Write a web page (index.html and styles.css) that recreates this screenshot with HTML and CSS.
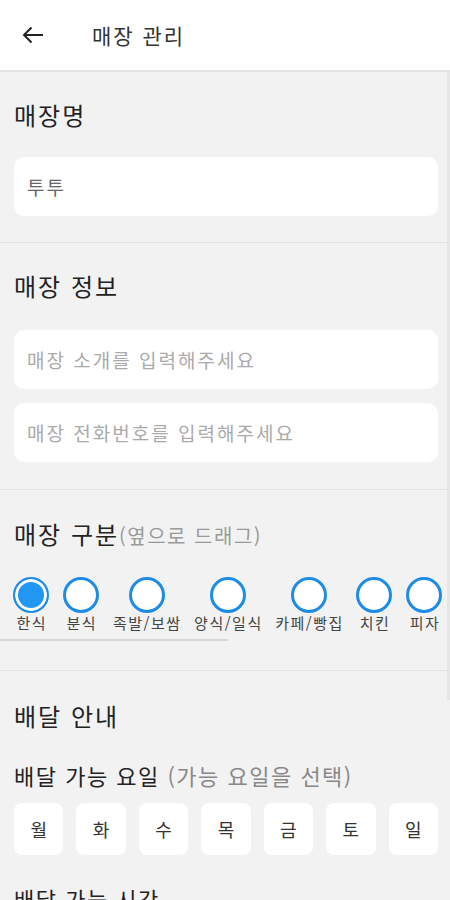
FILE: index.html
```html
<!DOCTYPE html>
<html lang="ko">
<head>
    <meta charset="UTF-8">
    <meta name="viewport" content="width=device-width, initial-scale=1.0">
    <title>매장 관리</title>
    <link rel="stylesheet" href="styles.css">
</head>
<body>
    <div id="header">
        <svg class="back" width="22" height="18" viewBox="0 0 22 18">
            <path d="M21 9H2M9.5 1.5L2 9l7.5 7.5" fill="none" stroke="#222" stroke-width="2"/>
        </svg>
        <h1>매장 관리</h1>
    </div>

    <div id="content">
        <div class="section first">
            <h2>매장명</h2>
            <input class="field" type="text" value="투투">
        </div>

        <div class="section info">
            <h2>매장 정보</h2>
            <div class="fields">
                <input class="field" type="text" placeholder="매장 소개를 입력해주세요">
                <input class="field" type="text" placeholder="매장 전화번호를 입력해주세요">
            </div>
        </div>

        <div class="section kind">
            <h2>매장 구분<span class="hint">(옆으로 드래그)</span></h2>
            <div id="kinds">
                <div class="kind-item"><span class="radio on"></span><span class="label">한식</span></div>
                <div class="kind-item"><span class="radio"></span><span class="label">분식</span></div>
                <div class="kind-item"><span class="radio"></span><span class="label">족발/보쌈</span></div>
                <div class="kind-item"><span class="radio"></span><span class="label">양식/일식</span></div>
                <div class="kind-item"><span class="radio"></span><span class="label">카페/빵집</span></div>
                <div class="kind-item"><span class="radio"></span><span class="label">치킨</span></div>
                <div class="kind-item"><span class="radio"></span><span class="label">피자</span></div>
            </div>
            <div class="hscroll"></div>
        </div>

        <div class="section delivery">
            <h2>배달 안내</h2>
            <h3>배달 가능 요일 <span class="hint">(가능 요일을 선택)</span></h3>
            <div id="days">
                <div class="day">월</div>
                <div class="day">화</div>
                <div class="day">수</div>
                <div class="day">목</div>
                <div class="day">금</div>
                <div class="day">토</div>
                <div class="day">일</div>
            </div>
            <h3 class="time">배달 가능 시간</h3>
        </div>
    </div>

    <div class="vscroll"></div>
</body>
</html>
```

FILE: styles.css
```css
body {
    margin: 0;
    font-family: "Noto Sans CJK KR", "Noto Sans", sans-serif;
    background: #f2f2f2;
    color: #222;
    overflow: hidden;
}
#header {
    height: 70px;
    background: #fff;
    border-bottom: 2px solid #e3e3e3;
    display: flex;
    align-items: center;
}
#header .back {
    margin-left: 22px;
}
#header h1 {
    margin: 0 0 0 48px;
    font-size: 21px;
    font-weight: 400;
    letter-spacing: 2px;
    color: #333;
}
.section {
    padding: 27px 12px 26px 14px;
    border-bottom: 1px solid #e2e2e2;
}
.section h2 {
    margin: 0 0 26px 0;
    font-size: 24px;
    line-height: 32px;
    font-weight: 400;
    letter-spacing: 2px;
    color: #222;
}
.section .hint {
    font-size: 20px;
    letter-spacing: 1.5px;
    color: #9a9a9a;
}
.field {
    display: block;
    box-sizing: border-box;
    width: 100%;
    height: 59px;
    border: none;
    border-radius: 10px;
    background: #fff;
    padding: 0 13px;
    font-family: "Noto Sans CJK KR", "Noto Sans", sans-serif;
    font-size: 19px;
    letter-spacing: 2px;
    color: #666;
    outline: none;
}
.field::placeholder {
    color: #aaa;
}
.info h2 {
    margin-bottom: 28px;
}
.fields {
    display: flex;
    flex-direction: column;
    gap: 14px;
}
.info {
    padding-bottom: 27px;
}
.kind {
    padding: 28px 0 29px 0;
}
.kind h2 {
    margin-left: 14px;
    margin-bottom: 25px;
}
#kinds {
    display: flex;
    gap: 14px;
    padding-left: 13px;
    white-space: nowrap;
}
.kind-item {
    display: flex;
    flex-direction: column;
    align-items: center;
}
.radio {
    box-sizing: border-box;
    width: 36px;
    height: 36px;
    border: 3px solid #1e8ce6;
    border-radius: 50%;
    background: #fff;
}
.radio.on {
    border-width: 2px;
    background: #2196f3;
    box-shadow: inset 0 0 0 3px #fff;
}
.label {
    font-size: 15px;
    line-height: 20px;
    letter-spacing: 1.5px;
    margin-right: -1.5px;
    color: #444;
}
.hscroll {
    width: 228px;
    height: 2px;
    margin-top: 6px;
    background: #d6d6d6;
}
.delivery {
    padding-top: 29px;
    border-bottom: none;
}
.delivery h2 {
    margin-bottom: 28px;
}
.delivery h3 {
    margin: 0;
    font-size: 22px;
    line-height: 30px;
    font-weight: 400;
    letter-spacing: 1.5px;
    color: #222;
}
.delivery h3 .hint {
    font-size: 22px;
    letter-spacing: 1.5px;
    color: #888;
}
#days {
    display: flex;
    gap: 13px;
    margin: 13px 0 28px 0;
}
.day {
    flex: 1;
    height: 52px;
    background: #fff;
    border-radius: 8px;
    display: flex;
    justify-content: center;
    align-items: center;
    font-size: 18px;
    color: #333;
}
.vscroll {
    position: fixed;
    top: 72px;
    right: 0;
    width: 3px;
    height: 628px;
    background: #e6e6e6;
}
```
